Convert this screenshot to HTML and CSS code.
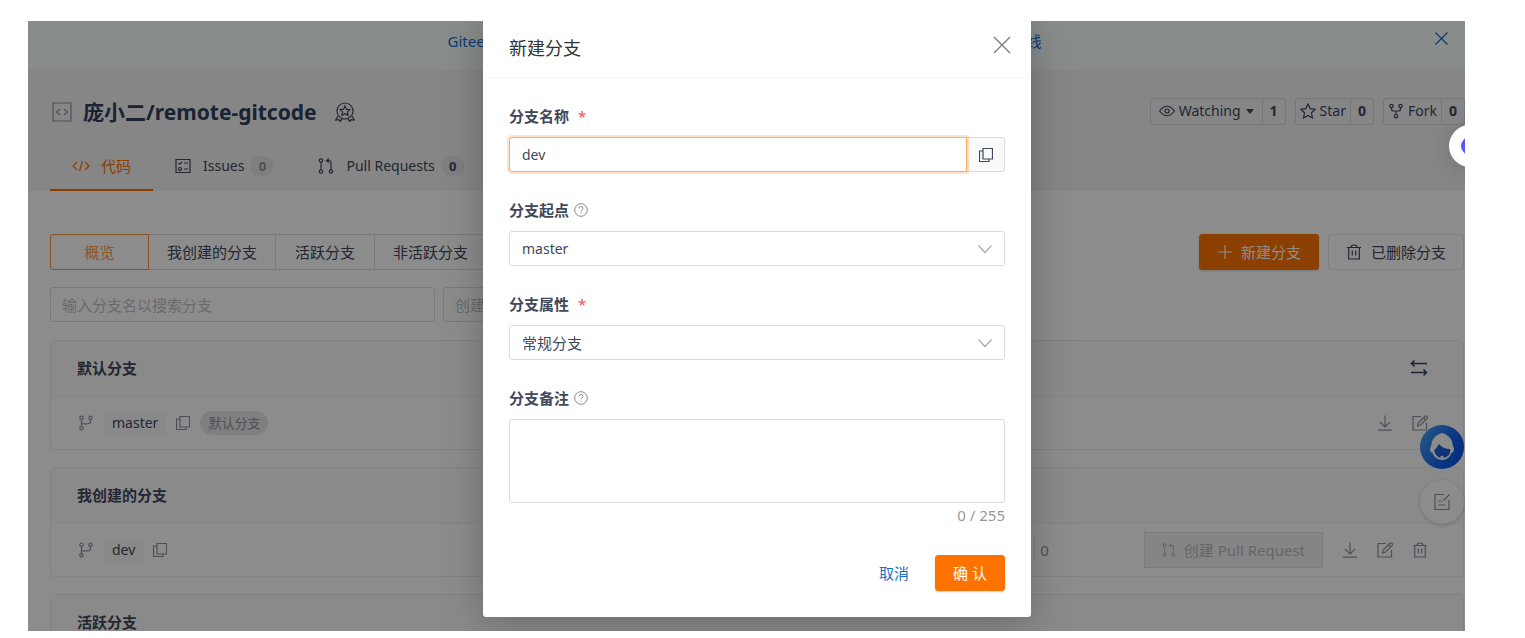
FILE: index.html
```html
<!DOCTYPE html>
<html lang="zh-CN">
<head>
<meta charset="utf-8">
<title>新建分支</title>
<link rel="stylesheet" href="styles.css">
</head>
<body>
<svg class="sprite" aria-hidden="true">
  <symbol id="i-close" viewBox="0 0 20 20"><path d="M2 2l16 16M18 2L2 18"/></symbol>
  <symbol id="i-repo" viewBox="0 0 20 20"><path d="M1 1h18v18H1zM8 7l-3.500 3L8 13M12 7l3.500 3L12 13"/></symbol>
  <symbol id="i-medal" viewBox="0 0 20 20"><circle cx="10" cy="9" r="8"/><path d="M10 4l1.500 3.200 3.400.4-2.500 2.300.7 3.400-3.100-1.700-3.100 1.700.7-3.400-2.500-2.300 3.400-.4zM3 14l-2.300 4 3.300-.3 1.200 2 2.300-3.500M17 14l2.300 4-3.300-.3-1.200 2-2.300-3.500"/></symbol>
  <symbol id="i-code" viewBox="0 0 18 18"><path d="M5 5L1 9l4 4M13 5l4 4-4 4M10.500 4l-3 10"/></symbol>
  <symbol id="i-list" viewBox="0 0 16 16"><path d="M1 1.500h14v13H1zM3.500 5l1.200 1.200L7 4M9 5h4M9 11h4"/><circle cx="5" cy="11" r="1.500"/></symbol>
  <symbol id="i-pr" viewBox="0 0 16 16"><circle cx="3" cy="2.500" r="1.700"/><circle cx="3" cy="13.500" r="1.700"/><circle cx="13" cy="13.500" r="1.700"/><path d="M3 4.200v7.600M8.500 2.500h2.500q2 0 2 2v7.300M11 .5l-2.500 2L11 4.800"/></symbol>
  <symbol id="i-eye" viewBox="0 0 16 16"><path d="M.5 8Q8-1.500 15.500 8 8 17.500.5 8z"/><circle cx="8" cy="8" r="2"/></symbol>
  <symbol id="i-star" viewBox="0 0 16 16"><path d="M8 1l2.200 4.700 5 .6-3.700 3.500 1 5.200L8 12.500 3.500 15l1-5.200L.8 6.300l5-.6z"/></symbol>
  <symbol id="i-fork" viewBox="0 0 16 16"><circle cx="3.500" cy="3" r="1.700"/><circle cx="12.500" cy="3" r="1.700"/><circle cx="8" cy="13.200" r="1.700"/><path d="M3.500 4.700V6q0 2 2 2h5q2 0 2-2V4.700M8 8v3.500"/></symbol>
  <symbol id="i-branch" viewBox="0 0 16 16"><circle cx="3.500" cy="2.700" r="1.700"/><circle cx="12.500" cy="2.700" r="1.700"/><circle cx="3.500" cy="13.300" r="1.700"/><path d="M3.500 4.400v7.200M3.500 8.800h6q3 0 3-2.500V4.400"/></symbol>
  <symbol id="i-copy" viewBox="0 0 14 14"><path d="M4 .5h9.500v10.500H4zM4 3H.5v10.500H10V11"/></symbol>
  <symbol id="i-plus" viewBox="0 0 16 16"><path d="M8 1v14M1 8h14"/></symbol>
  <symbol id="i-trash" viewBox="0 0 16 16"><path d="M1 3.500h14M5 3.500q0-2.500 3-2.500t3 2.500M2.700 3.500V15h10.600V3.500M6.300 6.500v5M9.700 6.500v5"/></symbol>
  <symbol id="i-swap" viewBox="0 0 18 18"><path d="M17 4.500H1.500M4.500 1.500l-3 3 3 3M1 13.500h15.500M13.500 10.500l3 3-3 3"/></symbol>
  <symbol id="i-down" viewBox="0 0 16 16"><path d="M8 .5v11M3 7l5 5 5-5M1 15.200h14"/></symbol>
  <symbol id="i-edit" viewBox="0 0 16 16"><path d="M9 1.500H1v13.500h13.500V8M5.500 11l.8-3.200 6.700-6.600q1-.8 2 .2t.2 2L8.600 10zM11.500 3l2 2"/></symbol>
  <symbol id="i-note" viewBox="0 0 18 18"><path d="M11 1.500H2v15h14V7M16.500 1.500l-6 6M5.500 8h3M5.500 12h6.500"/></symbol>
  <symbol id="i-help" viewBox="0 0 14 14"><circle cx="7" cy="7" r="6.300"/><path d="M5 5.500q0-2 2-2t2 1.800q0 1-1 1.600t-1 1.500M7 9.600v1"/></symbol>
  <symbol id="i-chev" viewBox="0 0 16 16"><path d="M1.500 4.500L8 11.500l6.500-7"/></symbol>
</svg>

<div class="screen">
  <div class="banner">
    <a class="banner-link" href="#"><span>Gitee</span><span>线</span></a>
    <button class="bare banner-close" aria-label="关闭公告"><svg class="icon s15"><use href="#i-close"/></svg></button>
  </div>

  <header class="repo">
    <div class="repo-top">
      <svg class="icon s20 muted"><use href="#i-repo"/></svg>
      <h1>庞小二/remote-gitcode</h1>
      <svg class="icon s20 medal"><use href="#i-medal"/></svg>
      <div class="repo-actions">
        <button class="stat"><span class="stat-name"><svg class="icon s16"><use href="#i-eye"/></svg>Watching<i class="caret"></i></span><b>1</b></button>
        <button class="stat tight"><span class="stat-name"><svg class="icon s16"><use href="#i-star"/></svg>Star</span><b>0</b></button>
        <button class="stat tight"><span class="stat-name"><svg class="icon s16"><use href="#i-fork"/></svg>Fork</span><b>0</b></button>
      </div>
    </div>
    <nav class="tabs">
      <a class="tab active" href="#"><svg class="icon s18"><use href="#i-code"/></svg>代码</a>
      <a class="tab latin" href="#"><svg class="icon s16"><use href="#i-list"/></svg><span>Issues<span class="count dim">0</span></span></a>
      <a class="tab latin" href="#"><svg class="icon s16"><use href="#i-pr"/></svg><span>Pull Requests<span class="count">0</span></span></a>
    </nav>
  </header>

  <main class="content">
    <div class="toolbar">
      <div class="segments">
        <button class="segment on">概览</button><button class="segment">我创建的分支</button><button class="segment">活跃分支</button><button class="segment">非活跃分支</button>
      </div>
      <div class="toolbar-right">
        <button class="btn primary"><svg class="icon s16"><use href="#i-plus"/></svg>新建分支</button>
        <button class="btn plain"><svg class="icon s16"><use href="#i-trash"/></svg>已删除分支</button>
      </div>
    </div>
    <div class="filters">
      <input class="filter search" type="text" placeholder="输入分支名以搜索分支" aria-label="搜索分支">
      <input class="filter" type="text" placeholder="创建" aria-label="创建">
    </div>

    <section class="card">
      <div class="card-head"><h2>默认分支</h2><button class="bare dark" aria-label="切换"><svg class="icon s18 bold"><use href="#i-swap"/></svg></button></div>
      <div class="card-row">
        <svg class="icon s16 muted"><use href="#i-branch"/></svg>
        <a class="chip latin" href="#">master</a>
        <button class="bare" aria-label="复制"><svg class="icon s14"><use href="#i-copy"/></svg></button>
        <span class="tag">默认分支</span>
        <div class="row-actions">
          <button class="bare" aria-label="下载"><svg class="icon s16"><use href="#i-down"/></svg></button>
          <button class="bare" aria-label="编辑"><svg class="icon s16"><use href="#i-edit"/></svg></button>
        </div>
      </div>
    </section>

    <section class="card">
      <div class="card-head"><h2>我创建的分支</h2></div>
      <div class="card-row">
        <svg class="icon s16 muted"><use href="#i-branch"/></svg>
        <a class="chip latin" href="#">dev</a>
        <button class="bare" aria-label="复制"><svg class="icon s14"><use href="#i-copy"/></svg></button>
        <div class="row-actions">
          <span class="ahead">0</span>
          <button class="btn disabled" disabled><svg class="icon s14"><use href="#i-pr"/></svg>创建 Pull Request</button>
          <button class="bare" aria-label="下载"><svg class="icon s16"><use href="#i-down"/></svg></button>
          <button class="bare" aria-label="编辑"><svg class="icon s16"><use href="#i-edit"/></svg></button>
          <button class="bare" aria-label="删除"><svg class="icon s16"><use href="#i-trash"/></svg></button>
        </div>
      </div>
    </section>

    <section class="card">
      <div class="card-head"><h2>活跃分支</h2></div>
    </section>
  </main>

  <div class="floaters">
    <button class="round service" aria-label="客服">
      <svg viewBox="0 0 44 44">
        <path fill="#fff" d="M22 8q4 1 6 3 4 3 4.500 8l1.500 5q0 3-2.500 4Q29 35 22 35t-9.500-7Q10 27 10 24l1.500-5q.5-5 4.500-8 2-2 6-3z"/>
        <path fill="#1c5fe0" d="M14 25q3-2 5-6 4 5 11 5 1 4-2 7-3 2-6 2-6 0-8-8z"/>
        <circle cx="22" cy="32" r="1.500" fill="#fff"/>
      </svg>
    </button>
    <button class="round note" aria-label="反馈"><svg class="icon s18"><use href="#i-note"/></svg></button>
  </div>

  <div class="mask">
    <form class="dialog" role="dialog" aria-labelledby="dialog-title">
      <div class="dialog-head">
        <h2 id="dialog-title">新建分支</h2>
        <button type="button" class="bare dialog-close" aria-label="关闭"><svg class="icon s20"><use href="#i-close"/></svg></button>
      </div>
      <div class="dialog-body">
        <div class="field">
          <label for="name">分支名称<span class="required">*</span></label>
          <div class="group">
            <input id="name" class="control focused latin" type="text" value="dev">
            <button type="button" class="addon" aria-label="复制"><svg class="icon s14"><use href="#i-copy"/></svg></button>
          </div>
        </div>
        <div class="field">
          <label for="start">分支起点<svg class="icon s14"><use href="#i-help"/></svg></label>
          <div class="select"><select id="start" class="control latin"><option>master</option></select><svg class="icon s16"><use href="#i-chev"/></svg></div>
        </div>
        <div class="field">
          <label for="kind">分支属性<span class="required">*</span></label>
          <div class="select"><select id="kind" class="control"><option>常规分支</option></select><svg class="icon s16"><use href="#i-chev"/></svg></div>
        </div>
        <div class="field">
          <label for="remark">分支备注<svg class="icon s14"><use href="#i-help"/></svg></label>
          <textarea id="remark" class="control"></textarea>
          <div class="counter">0 / 255</div>
        </div>
        <div class="dialog-foot">
          <button type="button" class="btn link">取消</button>
          <button type="button" class="btn primary confirm">确 认</button>
        </div>
      </div>
    </form>
  </div>
  <button class="assistant" aria-label="助手"><span></span></button>
</div>
</body>
</html>
```
FILE: styles.css
```css
* { box-sizing: border-box; }

body {
  margin: 0;
  padding: 21px 60px 7px 28px;
  background: #fff;
  color: #40485b;
  font: 15px/24px "Noto Sans", "Noto Sans CJK SC", sans-serif;
}

h1, h2 { margin: 0; font-weight: 700; }
a { color: inherit; text-decoration: none; }
button, input, select, textarea { font: inherit; color: inherit; margin: 0; }
button { padding: 0; border: 0; background: none; }

.sprite { display: none; }
.icon { flex: none; fill: none; stroke: currentColor; stroke-width: 1.2; }
.s14 { width: 14px; height: 14px; }
.s15 { width: 15px; height: 15px; }
.s16 { width: 16px; height: 16px; }
.s18 { width: 18px; height: 18px; }
.s20 { width: 20px; height: 20px; }
.bold { stroke-width: 1.5; }
.muted, .bare { color: #8c92a4; }
.bare { display: flex; }
.bare.dark { color: #2e405e; }
.latin { font-size: 14px; }

.screen {
  position: relative;
  height: calc(100vh - 28px);
  overflow: hidden;
  background: #fff;
}

.banner {
  position: relative;
  display: flex;
  justify-content: center;
  align-items: center;
  height: 48px;
  padding: 0 24px 8px 20px;
  background: #f8fffc;
  color: #0f70d0;
}
.banner-link { display: flex; justify-content: space-between; width: 594px; }
.banner-close { position: absolute; right: 16px; top: 10px; color: #0f70d0; }
.banner-close .icon { stroke-width: 1.6; }

.repo { padding-top: 28px; background: #f5f5f5; }
.repo-top { display: flex; align-items: center; height: 30px; margin-bottom: 15px; padding-left: 24px; }
.repo h1 { margin-left: 11px; color: #2e405e; font-size: 21px; line-height: 30px; }
.medal { margin-left: 18px; }
.repo-actions { display: flex; gap: 9px; margin: 0 0 2px auto; font-size: 14px; }
.stat { display: flex; align-items: stretch; height: 27px; border: 1px solid #d9d9d9; border-radius: 3px; }
.stat-name { display: flex; align-items: center; gap: 4px; padding: 0 8px; border-right: 1px solid #d9d9d9; }
.tight .stat-name { padding: 0 4px; }
.stat b { display: flex; align-items: center; justify-content: center; width: 22px; }
.caret { margin-left: 1px; border: 4px solid transparent; border-top: 5px solid; border-bottom: 0; }

.tabs { display: flex; padding-left: 22px; }
.tab { display: flex; align-items: center; gap: 12px; height: 49px; padding: 0 22px; border-bottom: 2px solid transparent; }
.tab.active { gap: 11px; border-color: #fe7300; color: #fe7300; }
.count { display: inline-block; min-width: 24px; margin-left: 6px; border-radius: 10px; background: #e8e8e8; font-size: 13px; font-weight: 700; line-height: 20px; text-align: center; }
.count.dim { color: #8c92a4; }

.content { padding: 43px 1px 0 22px; }
.toolbar { display: flex; justify-content: space-between; margin-bottom: 17px; }
.segments { display: flex; }
.segment { min-width: 99px; height: 36px; padding: 0 18px; border: 1px solid #dedede; border-left-width: 0; }
.segment.on { border: 1px solid #fe9a3e; border-radius: 3px 0 0 3px; color: #fe9a3e; }
.toolbar-right { display: flex; gap: 9px; }
.btn { display: flex; align-items: center; justify-content: center; gap: 8px; height: 36px; padding: 0 17px; border: 1px solid transparent; border-radius: 3px; }
.btn.primary { border-color: #fe7300; background: #fe7300; color: #fff; box-shadow: 0 1px 2px rgba(0, 0, 0, .15); }
.btn.plain { gap: 9px; border-color: #ebebeb; }
.btn.disabled { border-color: #e0e0e0; border-radius: 0; background: #f2f2f2; color: #bbb; }

.filters { display: flex; gap: 8px; margin-bottom: 18px; }
.filter { width: 190px; height: 35px; padding: 0 11px; border: 1px solid #dedede; border-radius: 3px; background: transparent; }
.filter.search { width: 385px; }
.filter::placeholder { color: #c2c2c2; opacity: 1; }

.card { margin-bottom: 17px; border: 1px solid #ebedf0; border-radius: 4px; }
.card-head { display: flex; align-items: center; justify-content: space-between; height: 56px; padding: 0 35px 2px 26px; border-bottom: 1px solid #f0f2f4; background: #fcfcfc; }
.card h2 { font-size: 15px; color: #40485b; }
.card-row { display: flex; align-items: center; gap: 10px; height: 52px; padding: 0 35px 0 27px; }
.chip { padding: 0 8px; border-radius: 3px; background: #fafafa; }
.tag { padding: 0 8px; border-radius: 12px; background: #e8e8e8; color: #8c92a4; font-size: 13px; }
.row-actions { display: flex; align-items: center; gap: 19px; margin-left: auto; }
.ahead { margin-right: 76px; padding-left: 5px; border-left: 1px solid #e0e0e0; color: #8c92a4; }

.floaters { position: absolute; right: 1px; top: 404px; display: grid; gap: 11px; }
.round { display: grid; place-items: center; width: 44px; height: 44px; border-radius: 50%; }
.service { background: linear-gradient(120deg, #4fa6ee, #1668f0 55%, #0648e0); }
.note { background: #fff; color: #8c92a4; box-shadow: 0 1px 4px rgba(0, 0, 0, .2); }

.mask {
  position: absolute;
  inset: 0;
  display: flex;
  justify-content: center;
  align-items: flex-start;
  padding-left: 21px;
  background: rgba(0, 0, 0, .45);
}
.dialog { width: 548px; border-radius: 0 0 3px 3px; background: #fff; box-shadow: 0 4px 40px rgba(0, 0, 0, .25); }
.dialog-head { display: flex; align-items: center; justify-content: space-between; height: 57px; padding: 0 19px 8px 26px; border-bottom: 1px solid #f7f7f7; }
.dialog-head h2 { padding-top: 6px; color: #333; font-size: 18px; font-weight: 400; }
.dialog-close { color: #777; }
.dialog-body { padding: 26px; }

.field { margin-bottom: 26px; }
.field label { display: flex; align-items: center; gap: 5px; margin-bottom: 9px; font-weight: 700; }
.field label .icon { color: #888; stroke-width: 1; }
.required { margin-left: 4px; color: #ff4d4f; font-weight: 400; }
.control { display: block; width: 100%; height: 35px; padding: 0 12px; border: 1px solid #dcdcdc; border-radius: 3px; background: #fff; outline: 0; }
.control.latin { font-size: 14px; }
.group { display: flex; }
.focused { flex: 1; position: relative; border-color: #ffa95c; border-radius: 3px 0 0 3px; box-shadow: 0 0 0 2px rgba(254, 115, 0, .2); }
.addon { display: grid; place-items: center; width: 38px; border: 1px solid #dcdcdc; border-left: 0; border-radius: 0 3px 3px 0; background: #fafafa; }
.select { position: relative; }
.select select { appearance: none; }
.select .icon { position: absolute; right: 12px; top: 10px; color: #aaa; pointer-events: none; }
textarea.control { height: 84px; resize: none; }
.counter { color: #999; text-align: right; }
.dialog-foot { display: flex; justify-content: flex-end; gap: 8px; padding-top: 2px; }
.btn.link { color: #1b6fc2; }

.assistant {
  position: absolute;
  right: -26px;
  top: 104px;
  display: grid;
  place-items: center;
  width: 42px;
  height: 42px;
  border-radius: 50%;
  background: #fff;
  box-shadow: 0 2px 20px rgba(0, 0, 0, .15);
}
.assistant span { width: 18px; height: 18px; border-radius: 50%; background: #5b55f6; }
```
